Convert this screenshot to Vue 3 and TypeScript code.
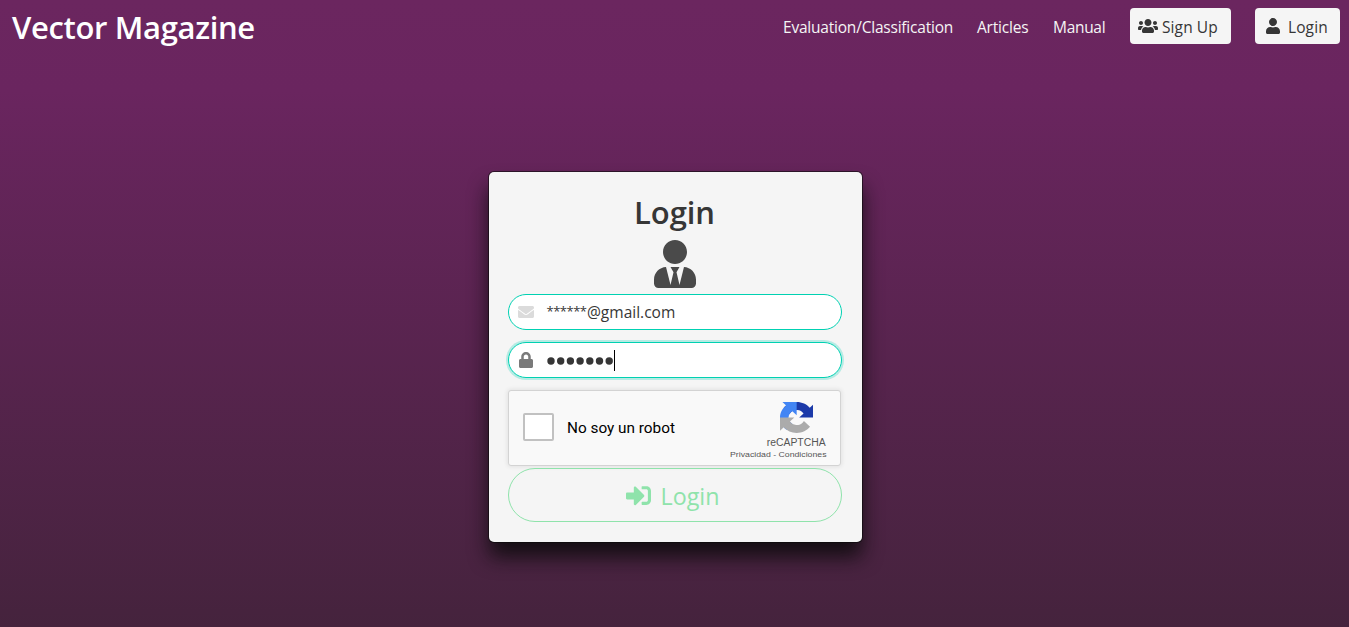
<script setup lang="ts">
import { ref } from 'vue'

interface Icon {
  box: string
  path: string
}

const icons: Record<string, Icon> = {
  users: {
    box: '0 0 640 512',
    path: 'M96 224c35.3 0 64-28.7 64-64s-28.7-64-64-64-64 28.7-64 64 28.7 64 64 64zm448 0c35.3 0 64-28.7 64-64s-28.7-64-64-64-64 28.7-64 64 28.7 64 64 64zm32 32h-64c-17.6 0-33.5 7.1-45.1 18.6 40.3 22.1 68.9 62 75.1 109.4h66c17.7 0 32-14.3 32-32v-32c0-35.3-28.7-64-64-64zm-256 0c61.9 0 112-50.1 112-112S381.9 32 320 32 208 82.1 208 144s50.1 112 112 112zm76.8 32h-8.3c-20.8 10-43.9 16-68.5 16s-47.6-6-68.5-16h-8.3C179.6 288 128 339.6 128 403.2V432c0 26.5 21.5 48 48 48h288c26.5 0 48-21.5 48-48v-28.8c0-63.6-51.6-115.2-115.2-115.2zm-223.7-13.4C161.5 263.1 145.6 256 128 256H64c-35.3 0-64 28.7-64 64v32c0 17.7 14.3 32 32 32h65.9c6.3-47.4 34.9-87.3 75.2-109.4z',
  },
  user: {
    box: '0 0 448 512',
    path: 'M224 256c70.7 0 128-57.3 128-128S294.7 0 224 0 96 57.3 96 128s57.3 128 128 128zm89.6 32h-16.7c-22.2 10.2-46.9 16-72.9 16s-50.6-5.8-72.9-16h-16.7C60.2 288 0 348.2 0 422.4V464c0 26.5 21.5 48 48 48h352c26.5 0 48-21.5 48-48v-41.6c0-74.2-60.2-134.4-134.4-134.4z',
  },
  userTie: {
    box: '0 0 448 512',
    path: 'M224 256c70.7 0 128-57.3 128-128S294.7 0 224 0 96 57.3 96 128s57.3 128 128 128zm95.8 32.6L272 480l-32-136 32-56h-96l32 56-32 136-47.8-191.4C56.9 292 0 350.3 0 422.4V464c0 26.5 21.5 48 48 48h352c26.5 0 48-21.5 48-48v-41.6c0-72.1-56.9-130.4-128.2-133.8z',
  },
  envelope: {
    box: '0 0 512 512',
    path: 'M502.3 190.8c3.9-3.1 9.7-.2 9.7 4.7V400c0 26.5-21.5 48-48 48H48c-26.5 0-48-21.5-48-48V195.6c0-5 5.7-7.8 9.7-4.7 22.4 17.4 52.1 39.5 154.1 113.6 21.1 15.4 56.7 47.8 92.2 47.6 35.7.3 72-32.8 92.3-47.6 102-74.1 131.6-96.3 154-113.7zM256 320c23.2.4 56.6-29.2 73.4-41.4 132.7-96.3 142.8-104.7 173.4-128.7 5.8-4.5 9.2-11.5 9.2-18.9v-19c0-26.5-21.5-48-48-48H48c-26.5 0-48 21.5-48 48v19c0 7.4 3.4 14.3 9.2 18.9 30.6 23.9 40.7 32.4 173.4 128.7 16.8 12.2 50.2 41.8 73.4 41.4z',
  },
  lock: {
    box: '0 0 448 512',
    path: 'M400 224h-24v-72C376 68.2 307.8 0 224 0S72 68.2 72 152v72H48c-26.5 0-48 21.5-48 48v192c0 26.5 21.5 48 48 48h352c26.5 0 48-21.5 48-48V272c0-26.5-21.5-48-48-48zm-104 0H152v-72c0-39.7 32.3-72 72-72s72 32.3 72 72v72z',
  },
  signIn: {
    box: '0 0 512 512',
    path: 'M416 448h-84c-6.6 0-12-5.4-12-12v-40c0-6.6 5.4-12 12-12h84c17.7 0 32-14.3 32-32V160c0-17.7-14.3-32-32-32h-84c-6.6 0-12-5.4-12-12V76c0-6.6 5.4-12 12-12h84c53 0 96 43 96 96v192c0 53-43 96-96 96zm-47-201L201 79c-15-15-41-4.5-41 17v96H24c-13.3 0-24 10.7-24 24v96c0 13.3 10.7 24 24 24h136v96c0 21.5 26 32 41 17l168-168c9.3-9.4 9.3-24.6 0-34z',
  },
}

const links: { label: string; key: string }[] = [
  { label: 'Evaluation/Classification', key: 'evaluation' },
  { label: 'Articles', key: 'articles' },
  { label: 'Manual', key: 'manual' },
]

const maskedUser = ref('******')
const mailHost = ref('@gmail.com')
const passwordLength = ref(7)
</script>

<template>
  <div class="page">
    <nav class="navbar">
      <span class="brand">Vector Magazine</span>
      <div class="menu">
        <a v-for="link in links" :key="link.key" class="link" :class="link.key">{{ link.label }}</a>
        <button class="nav-button signup">
          <svg :viewBox="icons.users.box"><path :d="icons.users.path" /></svg>
          <span>Sign Up</span>
        </button>
        <button class="nav-button signin">
          <svg :viewBox="icons.user.box"><path :d="icons.user.path" /></svg>
          <span>Login</span>
        </button>
      </div>
    </nav>

    <main class="content">
      <form class="card" @submit.prevent>
        <h1 class="title">Login</h1>
        <svg class="avatar" :viewBox="icons.userTie.box"><path :d="icons.userTie.path" /></svg>

        <div class="field">
          <svg class="envelope" :viewBox="icons.envelope.box"><path :d="icons.envelope.path" /></svg>
          <span class="email"><span class="masked">{{ maskedUser }}</span>{{ mailHost }}</span>
        </div>
        <div class="field focused">
          <svg class="lock" :viewBox="icons.lock.box"><path :d="icons.lock.path" /></svg>
          <svg class="dots" viewBox="0 0 67 8">
            <circle v-for="n in passwordLength" :key="n" :cx="4 + (n - 1) * 9.7" cy="4" r="3.7" />
          </svg>
          <span class="caret"></span>
        </div>

        <div class="captcha">
          <span class="checkbox"></span>
          <span class="captcha-label">No soy un robot</span>
          <div class="captcha-brand">
            <svg class="captcha-logo" viewBox="0 0 64 64" preserveAspectRatio="none">
              <path fill="#1c3aa9" d="M64 31.955l-.033-1.37V4.687l-7.16 7.16C50.948 4.674 42.033.093 32.05.093c-10.4 0-19.622 4.96-25.458 12.64l11.736 11.86a15.55 15.55 0 0 1 4.754-5.334c2.05-1.6 4.952-2.906 8.968-2.906.485 0 .86.057 1.135.163 4.976.393 9.288 3.14 11.828 7.124l-8.307 8.307L64 31.953" />
              <path fill="#4285f4" d="M31.862.094l-1.37.033H4.594l7.16 7.16C4.58 13.147 0 22.06 0 32.046c0 10.4 4.96 19.622 12.64 25.458L24.5 45.768a15.55 15.55 0 0 1-5.334-4.754c-1.6-2.05-2.906-4.952-2.906-8.968 0-.485.057-.86.163-1.135.393-4.976 3.14-9.288 7.124-11.828l8.307 8.307L31.86.095" />
              <path fill="#ababab" d="M.001 32.045l.033 1.37v25.898l7.16-7.16c5.86 7.173 14.774 11.754 24.76 11.754 10.4 0 19.622-4.96 25.458-12.64l-11.736-11.86a15.55 15.55 0 0 1-4.754 5.334c-2.05 1.6-4.952 2.906-8.968 2.906-.485 0-.86-.057-1.135-.163-4.976-.393-9.288-3.14-11.828-7.124l8.307-8.307c-10.522.04-22.4.066-27.295-.005" />
            </svg>
            <span class="captcha-name">reCAPTCHA</span>
            <span class="captcha-terms">Privacidad - Condiciones</span>
          </div>
        </div>

        <button class="submit">
          <svg :viewBox="icons.signIn.box"><path :d="icons.signIn.path" /></svg>
          <span>Login</span>
        </button>
      </form>
    </main>
  </div>
</template>

<style>
body {
  margin: 0;
  overflow: hidden;
}
</style>

<style scoped>
.page {
  height: 627px;
  display: flex;
  flex-direction: column;
  background: linear-gradient(180deg, #6b265f 0, #6a255f 90px, #45233d 627px);
  font-family: "Open Sans", "Noto Sans", sans-serif;
  font-size: 15.5px;
  color: #363636;
}
svg {
  fill: currentColor;
  display: block;
  flex: none;
}
span,
a {
  white-space: nowrap;
}
button {
  font: inherit;
  color: inherit;
  margin: 0;
  box-sizing: border-box;
}
.navbar {
  height: 52px;
  padding: 0 9px 0 12px;
  display: flex;
  justify-content: space-between;
  align-items: center;
  color: #f5f5f5;
}
.brand {
  font-size: 31px;
  font-weight: 550;
  letter-spacing: -0.34px;
  line-height: 52px;
  color: #fff;
  padding-top: 1px;
}
.menu {
  display: flex;
  align-items: center;
}
.link {
  margin-right: 24px;
  line-height: 24px;
  padding-top: 2px;
}
.evaluation {
  width: 170px;
  letter-spacing: -0.21px;
}
.articles {
  width: 52px;
  letter-spacing: -0.21px;
}
.manual {
  width: 53px;
  letter-spacing: -0.3px;
}
.nav-button {
  height: 36px;
  padding: 0;
  border: 0;
  border-radius: 4px;
  background: #f5f5f5;
  color: #363636;
  display: flex;
  align-items: center;
}
.nav-button svg {
  height: 16px;
  margin-top: -1px;
}
.nav-button span {
  padding-top: 2px;
  letter-spacing: 0.1px;
}
.signup {
  width: 101px;
  padding-left: 8px;
  margin-right: 24px;
  gap: 4px;
}
.signin {
  width: 85px;
  padding-left: 11px;
  gap: 8px;
}
.content {
  flex: 1;
  display: flex;
  justify-content: center;
  align-items: flex-start;
  padding: 120px 0 0 1px;
}
.card {
  width: 373px;
  height: 370px;
  box-sizing: border-box;
  padding: 20px 20px 20px 19px;
  border-radius: 5px;
  background: #f5f5f5;
  box-shadow: 0 0 0 1px rgba(10, 10, 10, 0.6), 0 15px 20px rgba(10, 10, 10, 0.85);
  display: flex;
  flex-direction: column;
}
.title {
  margin: 0;
  height: 48px;
  line-height: 40px;
  font-size: 31px;
  font-weight: 550;
  letter-spacing: -0.1px;
  text-align: center;
}
.avatar {
  width: 42px;
  height: 48px;
  align-self: center;
  color: #4a4a4a;
  margin-bottom: 6px;
}
.field {
  height: 36px;
  box-sizing: border-box;
  border: 1px solid #00d1b2;
  border-radius: 18px;
  background: #fff;
  display: flex;
  align-items: center;
  margin-bottom: 12px;
  padding-left: 9.5px;
}
.focused {
  box-shadow: 0 0 0 2px rgba(0, 209, 178, 0.25);
}
.envelope {
  width: 16px;
  height: 16px;
  color: #dbdbdb;
  margin-right: 12.5px;
}
.lock {
  width: 14px;
  height: 16px;
  color: #7a7a7a;
  margin: 0 13.5px 0 1px;
}
.masked {
  font-size: 13px;
  letter-spacing: -0.5px;
  margin-right: 0.5px;
  vertical-align: 2px;
  line-height: 1;
}
.dots {
  width: 67px;
  height: 8px;
  margin-top: 2px;
}
.caret {
  width: 1px;
  height: 21px;
  background: #000;
}
.captcha {
  height: 76px;
  width: 333px;
  box-sizing: border-box;
  border: 1px solid #d3d3d3;
  border-radius: 3px;
  background: #f9f9f9;
  box-shadow: 0 0 4px 1px rgba(0, 0, 0, 0.08);
  display: flex;
  padding: 0 14px;
  color: #000;
  font-family: Roboto, sans-serif;
}
.checkbox {
  width: 31px;
  height: 28px;
  box-sizing: border-box;
  border: 2px solid #c1c1c1;
  border-radius: 2px;
  background: #fff;
  margin: 22px 13px 0 0;
}
.captcha-label {
  font-size: 14px;
  line-height: 75px;
  transform: scaleX(1.095);
  transform-origin: left;
}
.captcha-brand {
  flex: 1;
  display: flex;
  flex-direction: column;
  align-items: flex-end;
  padding-top: 11px;
  color: #555;
  font-family: "Liberation Sans", Arial, sans-serif;
}
.captcha-logo {
  width: 33.5px;
  height: 31px;
  margin-right: 12.5px;
}
.captcha-name {
  font-size: 10px;
  line-height: 11px;
  margin-top: 4px;
  margin-right: -0.5px;
  transform: scaleX(1.04);
  transform-origin: right;
}
.captcha-terms {
  font-size: 8px;
  line-height: 11px;
  margin-top: 1px;
  margin-right: -0.5px;
  transform: scaleX(1.09);
  transform-origin: right;
}
.submit {
  height: 54px;
  margin-top: 2px;
  padding: 0 0 0 117px;
  border: 1px solid #8fe3ab;
  border-radius: 27px;
  background: transparent;
  color: #8fe3ab;
  font-size: 23.3px;
  display: flex;
  align-items: center;
  gap: 10px;
}
.submit span {
  padding-top: 2px;
}
.submit svg {
  width: 25px;
  height: 25px;
}
</style>
